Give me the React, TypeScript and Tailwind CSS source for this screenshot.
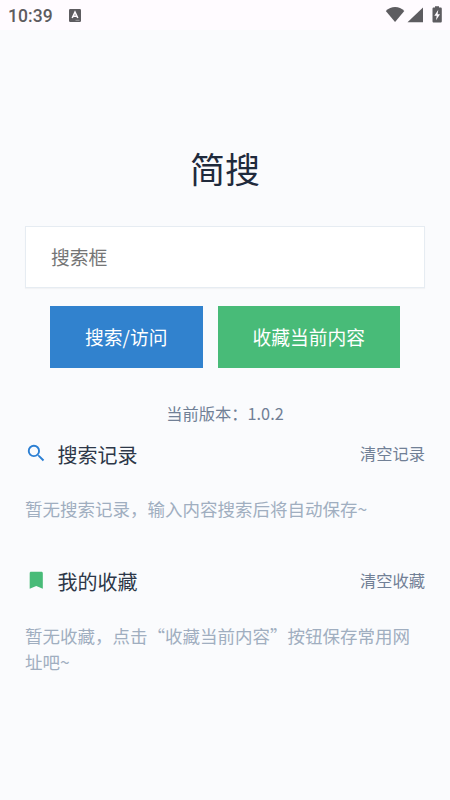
import type { ReactNode } from 'react';

function StatusBar() {
  return (
    <header className="flex h-[30px] items-center bg-[#fffbff] pl-2 pr-[7px] text-[#5d5c60]">
      <span className="pt-px font-['Roboto',sans-serif] text-[17.5px] leading-[30px] tracking-[0.1px] font-medium">10:39</span>
      <svg className="ml-4 h-[13px] w-3" viewBox="0 0 12 13" fill="none">
        <rect width="12" height="13" rx="1.2" fill="currentColor" />
        <path d="M3.2 9 L6 3.2 L8.8 9 M4.4 7.2 H7.6" stroke="#fffbff" strokeWidth="1.6" />
        <path d="M6.5 11.3H10.5" stroke="#aaa9ad" strokeWidth=".8" />
      </svg>
      <svg className="ml-auto h-[18px] w-[58px]" viewBox="0 0 58 18" fill="currentColor">
        <path d="M.8 5.2C6-.1 14.300-.1 19.300 5.200L10.050 16.200Z" transform="translate(0 -.3)" />
        <path d="M38 1.500V16.300H22.500Z" />
        <path d="M50 1.500V.2H54V1.500H55.500C56.300 1.500 56.800 2 56.800 2.800V15.200C56.800 16 56.300 16.500 55.500 16.500H48.800C48 16.500 47.500 16 47.500 15.200V2.800C47.500 2 48 1.500 48.800 1.500Z" />
        <path d="M53.300 3.800L49.300 9.800H51.700L51 14.300L55 8.200H52.600Z" fill="#fffbff" />
      </svg>
    </header>
  );
}

interface SectionProps {
  icon: ReactNode;
  title: string;
  action: string;
  empty: string;
  className: string;
}

function Section({ icon, title, action, empty, className }: SectionProps) {
  return (
    <section className={className}>
      <div className="flex h-[30px] items-center">
        {icon}
        <h2 className="ml-[10px] pt-px text-[20px] leading-[30px] text-[#2d3748]">{title}</h2>
        <button className="mb-[2px] ml-auto text-[16.25px] leading-[28px] text-[#718096]">{action}</button>
      </div>
      <p className="mt-[27px] text-[17.5px] leading-[26px] text-[#a0aec0]">{empty}</p>
    </section>
  );
}

export default function App() {
  return (
    <div lang="zh-CN" className="h-[800px] w-[450px] overflow-hidden bg-[#fafbfd] font-['Noto_Sans_CJK_SC',sans-serif]">
      <StatusBar />
      <main className="px-[25px] pt-[112px]">
        <h1 className="text-center text-[35px] leading-[52px] text-[#1f2a3c]">简搜</h1>
        <input
          placeholder="搜索框"
          className="mt-[31.5px] block h-[62.5px] w-full border border-[#e6ecf2] bg-white px-[25px] pb-[1px] text-[18.75px] shadow-[0_1px_1px_rgba(0,0,0,0.03)] outline-none placeholder:text-[#757575]"
        />
        <div className="mt-[18px] flex justify-center gap-[15px] text-[18.75px] text-white">
          <button className="h-[62px] w-[152.5px] bg-[#3182ce]">搜索/访问</button>
          <button className="h-[62px] w-[182.5px] bg-[#48bb78]">收藏当前内容</button>
        </div>
        <p className="mt-[33px] text-center text-[16.25px] leading-6 text-[#718096]">当前版本：1.0.2</p>
        <Section
          className="mt-[14px]"
          title="搜索记录"
          action="清空记录"
          empty="暂无搜索记录，输入内容搜索后将自动保存~"
          icon={
            <svg className="mb-[1px] size-[22.5px]" viewBox="0 0 24 24" fill="#2b7fd3">
              <path d="M15.500 14h-.79l-.28-.27A6.470 6.470 0 0 0 16 9.500 6.500 6.500 0 1 0 9.500 16c1.610 0 3.090-.59 4.230-1.570l.27.28v.79l5 4.990L20.490 19l-4.990-5zm-6 0C7.010 14 5 11.990 5 9.500S7.010 5 9.500 5 14 7.010 14 9.500 11.990 14 9.500 14z" />
            </svg>
          }
        />
        <Section
          className="mt-[44px]"
          title="我的收藏"
          action="清空收藏"
          empty="暂无收藏，点击“收藏当前内容”按钮保存常用网址吧~"
          icon={
            <svg className="mb-[2px] size-[22.5px]" viewBox="0 0 24 24" fill="#48bb78">
              <path d="M17.500 3H6.500C5.600 3 5.010 3.600 5.010 4.400L5 21l7-3 7 3V4.400c0-.8-.6-1.400-1.500-1.400z" />
            </svg>
          }
        />
      </main>
    </div>
  );
}
